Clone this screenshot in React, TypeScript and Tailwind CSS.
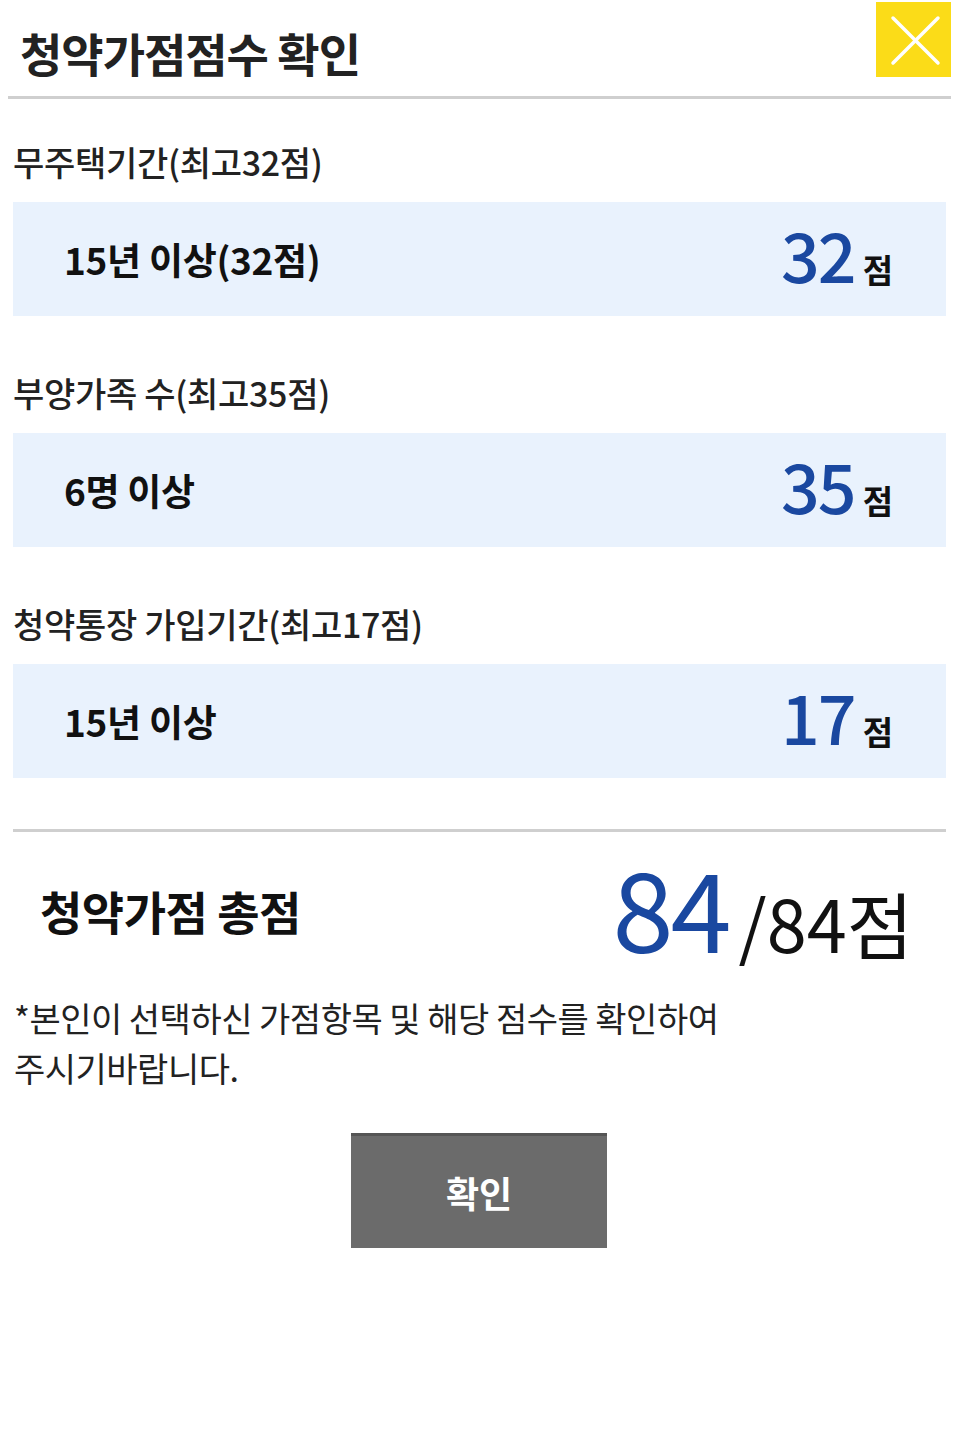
import React from "react";

const font = { fontFamily: '"Noto Sans CJK KR", "Noto Sans", sans-serif' };

function Item({ label, value, score, first }: { label: string; value: string; score: string; first?: boolean }) {
  return (
    <div className={first ? "mt-[43px]" : "mt-[57px]"}>
      <div className="text-[34px] leading-[40px] font-medium text-[#222] tracking-[-0.3px]">{label}</div>
      <div className="mt-[20px] h-[114px] bg-[#e9f2fd] flex items-center justify-between pl-[51px] pr-[53px]">
        <div className="text-[37px] font-semibold text-[#111] tracking-[-0.3px] leading-none">{value}</div>
        <div className="flex items-baseline mt-[-10px]">
          <span className="text-[68px] font-medium text-[#1a48a0] leading-none tracking-[-2px]">{score}</span>
          <span className="ml-[8px] text-[33px] font-bold text-[#111] leading-none">점</span>
        </div>
      </div>
    </div>
  );
}

export default function App() {
  return (
    <div className="w-[968px] h-[1438px] bg-white" style={font}>
      <div className="flex justify-between items-start h-[96px]">
        <div className="pl-[20px] pt-[24px] text-[46px] font-bold text-[#222] leading-[56px] tracking-[-1px]">청약가점점수 확인</div>
        <div className="mt-[2px] mr-[17px] w-[75px] h-[75px] bg-[#fbdc18] flex items-center justify-center">
          <svg width="75" height="75" viewBox="0 0 75 75">
            <line x1="17" y1="16" x2="62" y2="61" stroke="white" strokeWidth="3.5" strokeLinecap="round" />
            <line x1="62" y1="16" x2="17" y2="61" stroke="white" strokeWidth="3.5" strokeLinecap="round" />
          </svg>
        </div>
      </div>
      <div className="ml-[8px] w-[943px] h-[3px] bg-[#cfcfcf]" />
      <div className="ml-[13px] w-[933px]">
        <Item first label="무주택기간(최고32점)" value="15년 이상(32점)" score="32" />
        <Item label="부양가족 수(최고35점)" value="6명 이상" score="35" />
        <Item label="청약통장 가입기간(최고17점)" value="15년 이상" score="17" />
        <div className="mt-[51px] h-[3px] bg-[#cfcfcf]" />
        <div className="flex items-center justify-between h-[160px] pl-[27px] pr-[33px]">
          <div className="text-[46px] font-bold text-[#111] leading-none tracking-[-0.5px] mb-[4px]">청약가점 총점</div>
          <div className="flex items-baseline mb-[14px]">
            <span className="text-[110px] font-normal text-[#1a48a0] leading-none tracking-[-3px]">84</span>
            <span className="ml-[10px] text-[72px] font-normal text-[#111] leading-none">/84점</span>
          </div>
        </div>
      </div>
      <div className="ml-[14px] mt-[1px] text-[34px] leading-[50px] text-[#222] tracking-[-0.5px]">
        *본인이 선택하신 가점항목 및 해당 점수를 확인하여
        <br />
        주시기바랍니다.
      </div>
      <div className="ml-[351px] mt-[40px] w-[256px] h-[115px] bg-[#6b6b6b] border-t-[3px] border-[#555] flex items-center justify-center">
        <span className="text-[36px] font-bold text-white leading-none">확인</span>
      </div>
    </div>
  );
}
